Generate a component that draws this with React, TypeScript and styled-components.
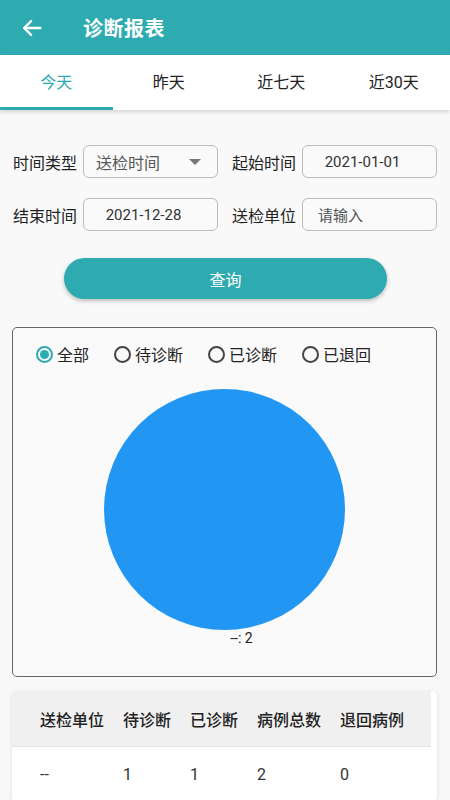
import React from 'react';
import styled, { createGlobalStyle } from 'styled-components';

const GlobalStyle = createGlobalStyle`
  html, body {
    margin: 0;
    padding: 0;
    background: #f9f9f9;
    font-family: Roboto, "Noto Sans CJK SC", sans-serif;
  }
  * { box-sizing: border-box; }
`;

const TEAL = '#2eabb1';

const Page = styled.div`
  width: 450px;
  height: 800px;
  overflow: hidden;
  background: #f9f9f9;
`;

const Header = styled.header`
  height: 55px;
  background: ${TEAL};
  display: flex;
  align-items: center;
  padding-left: 20px;
  color: #fff;
`;

const BackButton = styled.div`
  width: 24px;
  height: 24px;
  display: flex;
  align-items: center;
  justify-content: center;
  margin-right: 39px;
`;

const Title = styled.h1`
  margin: 0;
  font-size: 20px;
  font-weight: 700;
  letter-spacing: 0.5px;
`;

const Tabs = styled.nav`
  height: 55px;
  background: #fff;
  display: flex;
  box-shadow: 0 2px 4px rgba(0, 0, 0, 0.15);
  position: relative;
`;

const Tab = styled.div<{ $active?: boolean }>`
  flex: 1;
  display: flex;
  align-items: center;
  justify-content: center;
  font-size: 16px;
  color: ${p => (p.$active ? TEAL : '#222')};
  border-bottom: 3px solid ${p => (p.$active ? TEAL : 'transparent')};
  padding-bottom: 1px;
`;

const Form = styled.section`
  padding: 35px 13px 0 13px;
  display: grid;
  grid-template-columns: 70px 135px 84px 135px;
  row-gap: 20px;
  align-items: center;
  & > :nth-child(4n + 3) {
    padding-left: 14px;
  }
`;

const Label = styled.span`
  font-size: 16px;
  color: #222;
  white-space: nowrap;
`;

const Field = styled.div<{ $align?: 'left' | 'center' }>`
  height: 33px;
  border: 1px solid #bdbdbd;
  border-radius: 6px;
  background: #fafafa;
  display: flex;
  align-items: center;
  justify-content: ${p => (p.$align === 'center' ? 'center' : 'space-between')};
  padding: 0 14px 0 ${p => (p.$align === 'center' ? '0' : '12px')};
  font-size: 15px;
  color: #333;
`;

const Placeholder = styled.span<{ $large?: boolean }>`
  color: #555;
  font-size: ${p => (p.$large ? '16px' : '15px')};
  padding-left: ${p => (p.$large ? '0' : '3px')};
`;

const Caret = styled.span`
  width: 0;
  height: 0;
  border-left: 6px solid transparent;
  border-right: 6px solid transparent;
  border-top: 6px solid #777;
  margin-right: 2px;
`;

const ButtonRow = styled.div`
  display: flex;
  justify-content: center;
  padding: 27px 0 0 0;
`;

const QueryButton = styled.button`
  width: 323px;
  height: 41px;
  border: none;
  border-radius: 21px;
  background: ${TEAL};
  color: #fff;
  font-size: 16px;
  font-family: inherit;
  box-shadow: 0 2px 4px rgba(0, 0, 0, 0.25);
  margin-left: 1px;
`;

const ChartCard = styled.section`
  margin: 28px 13px 0 12px;
  height: 350px;
  border: 1px solid #666;
  border-radius: 5px;
  background: #fafafa;
  display: flex;
  flex-direction: column;
  align-items: center;
`;

const RadioRow = styled.div`
  align-self: stretch;
  display: flex;
  gap: 25px;
  padding: 14px 0 0 23px;
`;

const RadioItem = styled.label`
  display: flex;
  align-items: center;
  gap: 4px;
  font-size: 16px;
  color: #222;
`;

const RadioDot = styled.span<{ $checked?: boolean }>`
  width: 17px;
  height: 17px;
  border-radius: 50%;
  border: 2px solid ${p => (p.$checked ? TEAL : '#444')};
  display: flex;
  align-items: center;
  justify-content: center;
  &::after {
    content: '';
    width: 9px;
    height: 9px;
    border-radius: 50%;
    background: ${p => (p.$checked ? TEAL : 'transparent')};
  }
`;

const Pie = styled.div`
  width: 241px;
  height: 241px;
  border-radius: 50%;
  background: #2196f3;
  margin-top: 23px;
`;

const PieLabel = styled.div`
  font-size: 14px;
  color: #222;
  margin-top: 0;
  margin-left: 34px;
`;

const TableCard = styled.section`
  margin: 14px 13px 0 12px;
  background: #fff;
  border-radius: 5px;
  box-shadow: 0 1px 4px rgba(0, 0, 0, 0.12);
  overflow: hidden;
`;

const Row = styled.div<{ $head?: boolean }>`
  display: grid;
  grid-template-columns: 83px 67px 67px 83px 1fr;
  align-items: center;
  height: ${p => (p.$head ? '56px' : '54px')};
  padding-left: 28px;
  background: ${p => (p.$head ? '#f0f0f0' : '#fff')};
  border-bottom: ${p => (p.$head ? '1px solid #e4e4e4' : 'none')};
  margin-right: ${p => (p.$head ? '6px' : '0')};
  font-size: 16px;
  font-weight: ${p => (p.$head ? 500 : 400)};
  color: ${p => (p.$head ? '#222' : '#333')};
  white-space: nowrap;
`;

const BackArrow = () => (
  <svg width="22" height="22" viewBox="0 0 24 24" fill="none" stroke="#fff" strokeWidth="2.6" strokeLinecap="round" strokeLinejoin="round">
    <path d="M21 12H4" />
    <path d="M11 4.5L3.5 12L11 19.5" />
  </svg>
);

const tabs = ['今天', '昨天', '近七天', '近30天'];
const radios = ['全部', '待诊断', '已诊断', '已退回'];
const columns = ['送检单位', '待诊断', '已诊断', '病例总数', '退回病例'];
const rows = [['--', '1', '1', '2', '0']];

export default function App() {
  return (
    <Page>
      <GlobalStyle />
      <Header>
        <BackButton><BackArrow /></BackButton>
        <Title>诊断报表</Title>
      </Header>
      <Tabs>
        {tabs.map((t, i) => (
          <Tab key={t} $active={i === 0}>{t}</Tab>
        ))}
      </Tabs>

      <Form>
        <Label>时间类型</Label>
        <Field>
          <Placeholder $large>送检时间</Placeholder>
          <Caret />
        </Field>
        <Label>起始时间</Label>
        <Field $align="center">2021-01-01</Field>
        <Label>结束时间</Label>
        <Field $align="center">2021-12-28</Field>
        <Label>送检单位</Label>
        <Field>
          <Placeholder>请输入</Placeholder>
        </Field>
      </Form>

      <ButtonRow>
        <QueryButton>查询</QueryButton>
      </ButtonRow>

      <ChartCard>
        <RadioRow>
          {radios.map((r, i) => (
            <RadioItem key={r}>
              <RadioDot $checked={i === 0} />
              {r}
            </RadioItem>
          ))}
        </RadioRow>
        <Pie />
        <PieLabel>--: 2</PieLabel>
      </ChartCard>

      <TableCard>
        <Row $head>
          {columns.map(c => <span key={c}>{c}</span>)}
        </Row>
        {rows.map((r, i) => (
          <Row key={i}>
            {r.map((v, j) => <span key={j}>{v}</span>)}
          </Row>
        ))}
      </TableCard>
    </Page>
  );
}
